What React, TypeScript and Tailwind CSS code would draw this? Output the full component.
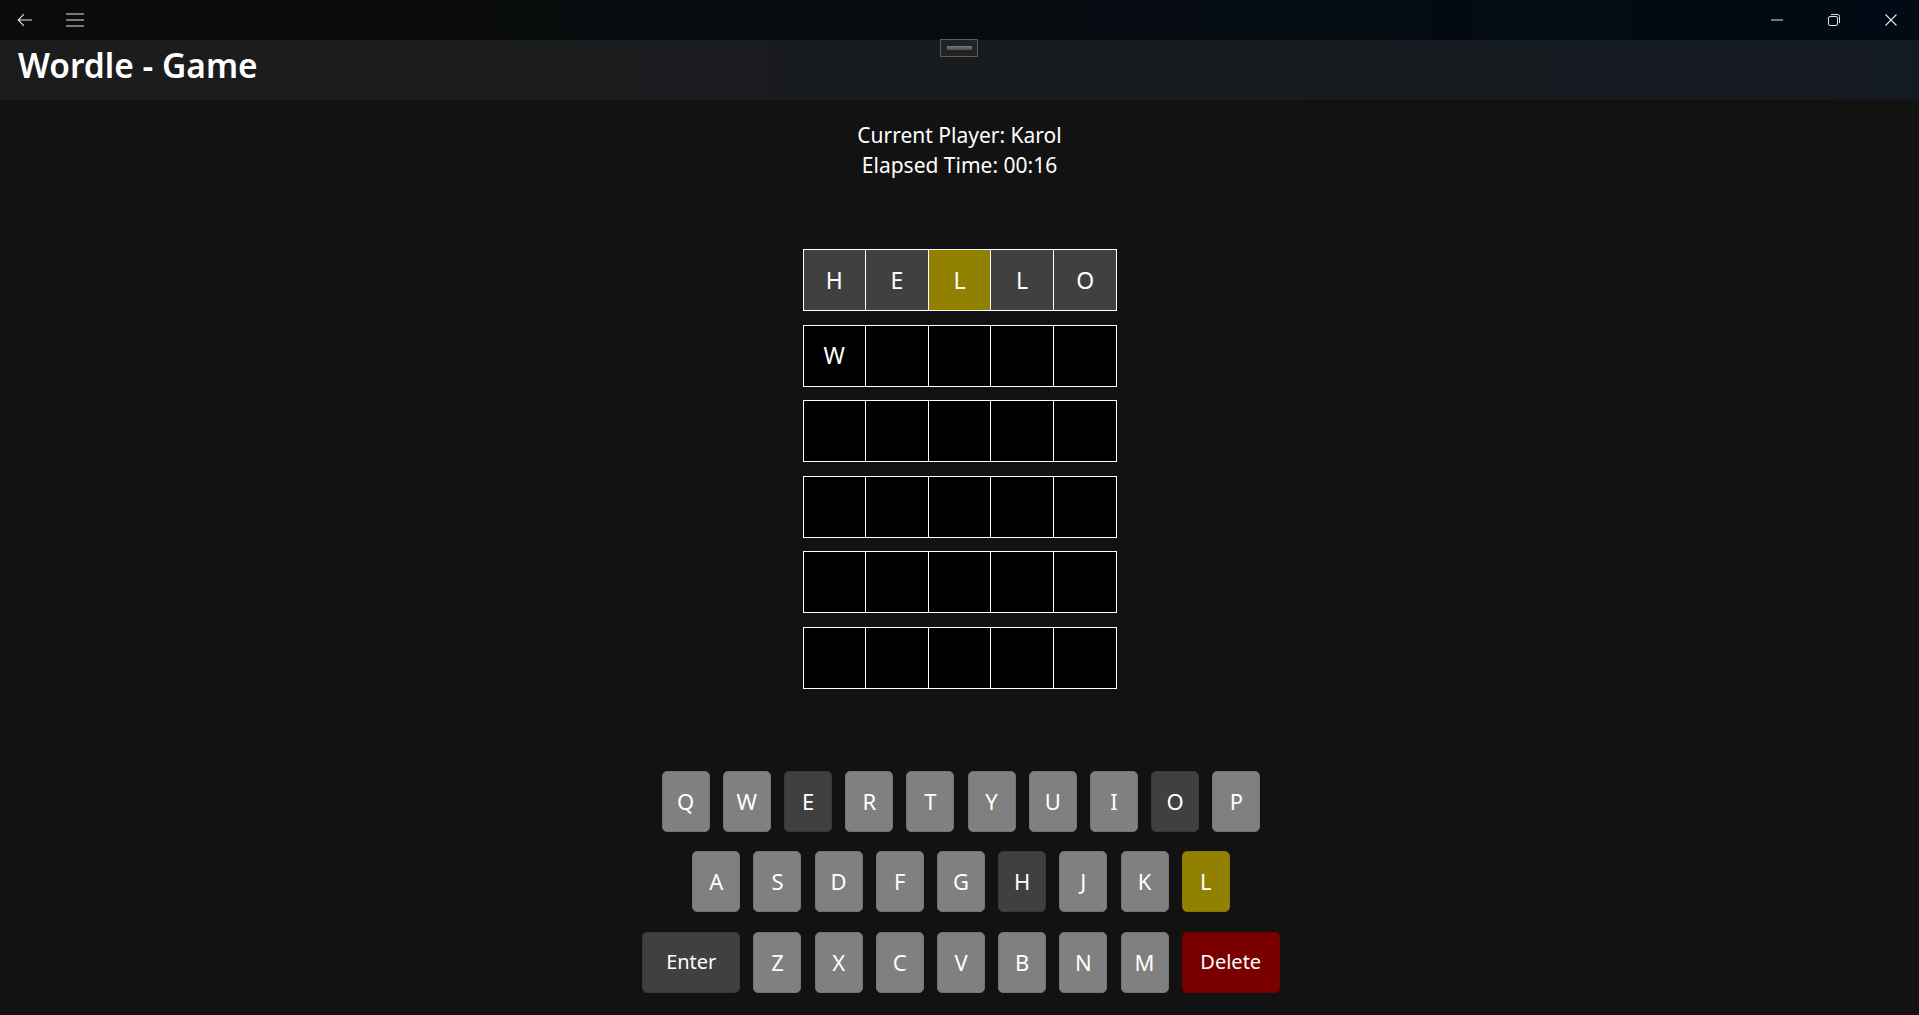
import React from "react";

type Tone = "light" | "dark" | "yellow" | "red";

const rows: { letter: string; tone: "empty" | "gray" | "yellow" }[][] = [
  [
    { letter: "H", tone: "gray" },
    { letter: "E", tone: "gray" },
    { letter: "L", tone: "yellow" },
    { letter: "L", tone: "gray" },
    { letter: "O", tone: "gray" },
  ],
  [
    { letter: "W", tone: "empty" },
    { letter: "", tone: "empty" },
    { letter: "", tone: "empty" },
    { letter: "", tone: "empty" },
    { letter: "", tone: "empty" },
  ],
  ...Array.from({ length: 4 }, () =>
    Array.from({ length: 5 }, () => ({ letter: "", tone: "empty" as const }))
  ),
];

const keyRows: { label: string; tone: Tone; wide?: boolean }[][] = [
  "QWERTYUIOP".split("").map((k) => ({
    label: k,
    tone: (k === "E" || k === "O" ? "dark" : "light") as Tone,
  })),
  "ASDFGHJKL".split("").map((k) => ({
    label: k,
    tone: (k === "H" ? "dark" : k === "L" ? "yellow" : "light") as Tone,
  })),
  [
    { label: "Enter", tone: "dark", wide: true },
    ...("ZXCVBNM".split("").map((k) => ({ label: k, tone: "light" as Tone }))),
    { label: "Delete", tone: "red", wide: true },
  ],
];

const toneClass: Record<Tone, string> = {
  light: "bg-[#808080] border-[#747474]",
  dark: "bg-[#404040] border-[#383838]",
  yellow: "bg-[#928000] border-[#857500]",
  red: "bg-[#7a0000] border-[#6e0000]",
};

function Key({ label, tone, wide }: { label: string; tone: Tone; wide?: boolean }) {
  return (
    <div
      className={`flex h-[61px] items-center justify-center rounded-[5px] border text-white ${toneClass[tone]} ${
        wide ? "w-[98px] text-[20px]" : "w-[48px] text-[22px]"
      }`}
    >
      {label}
    </div>
  );
}

function TitleBar() {
  return (
    <div className="relative flex h-[40px] shrink-0 items-center bg-gradient-to-r from-[#0c0b09] to-[#010b15] text-white">
      <svg className="ml-[17px] h-[14px] w-[16px]" viewBox="0 0 16 14" fill="none" stroke="#e5e5e5" strokeWidth="1.1">
        <path d="M15 7H1.5M7 1.2L1.2 7L7 12.8" />
      </svg>
      <svg className="ml-[33px] h-[14px] w-[18px]" viewBox="0 0 18 14" fill="none" stroke="#e5e5e5" strokeWidth="1.1">
        <path d="M0 1H18M0 7H18M0 13H18" />
      </svg>
      <div className="ml-auto flex h-full items-center">
        <div className="flex h-full w-[57px] items-center justify-center">
          <svg className="h-[2px] w-[12px]" viewBox="0 0 12 2" stroke="#e5e5e5" strokeWidth="1">
            <path d="M0 1H12" />
          </svg>
        </div>
        <div className="flex h-full w-[57px] items-center justify-center">
          <svg className="h-[12px] w-[12px]" viewBox="0 0 12 12" fill="none" stroke="#e5e5e5" strokeWidth="1">
            <rect x="0.5" y="2.5" width="9" height="9" rx="1.5" />
            <path d="M3 0.5H9.5a2 2 0 0 1 2 2V9" />
          </svg>
        </div>
        <div className="flex h-full w-[57px] items-center justify-center">
          <svg className="h-[12px] w-[12px]" viewBox="0 0 12 12" stroke="#e5e5e5" strokeWidth="1.1">
            <path d="M0.5 0.5L11.5 11.5M11.5 0.5L0.5 11.5" />
          </svg>
        </div>
      </div>
      {/* compact overlay grabber */}
      <div className="absolute left-[940px] top-[39px] z-10 flex h-[18px] w-[38px] items-center justify-center border border-[#5c5c5c] bg-[#232323]">
        <div className="h-[4px] w-[25px] bg-gradient-to-b from-[#7a7a7a] to-[#4c4c4c]" />
      </div>
    </div>
  );
}

export default function App() {
  return (
    <div
      className="flex h-screen w-full flex-col overflow-hidden bg-[#121212] text-white"
      style={{ fontFamily: '"Noto Sans", "Open Sans", sans-serif' }}
    >
      <TitleBar />
      <div className="flex h-[60px] shrink-0 items-center bg-gradient-to-r from-[#1c1c1c] to-[#141a21] pl-[18px]">
        <h1 className="mb-[9px] text-[33.5px] font-semibold leading-none">Wordle - Game</h1>
      </div>

      <div className="flex flex-col items-center pt-[20px] text-[21px] leading-[30px]">
        <p>Current Player: Karol</p>
        <p>Elapsed Time: 00:16</p>
      </div>

      <div className="mt-[69px] flex flex-col items-center gap-[13.6px] pl-[1px]">
        {rows.map((row, r) => (
          <div key={r} className="flex h-[62px] divide-x divide-white border border-white">
            {row.map((cell, c) => (
              <div
                key={c}
                className={`flex h-full w-[62.6px] items-center justify-center text-[23px] ${
                  cell.tone === "gray" ? "bg-[#404040]" : cell.tone === "yellow" ? "bg-[#928000]" : "bg-black"
                }`}
              >
                {cell.letter}
              </div>
            ))}
          </div>
        ))}
      </div>

      <div className="mt-[82px] flex flex-col items-center gap-[19.5px] pl-[3px]">
        {keyRows.map((row, r) => (
          <div key={r} className="flex gap-[13.2px]">
            {row.map((k) => (
              <Key key={k.label} {...k} />
            ))}
          </div>
        ))}
      </div>
    </div>
  );
}
